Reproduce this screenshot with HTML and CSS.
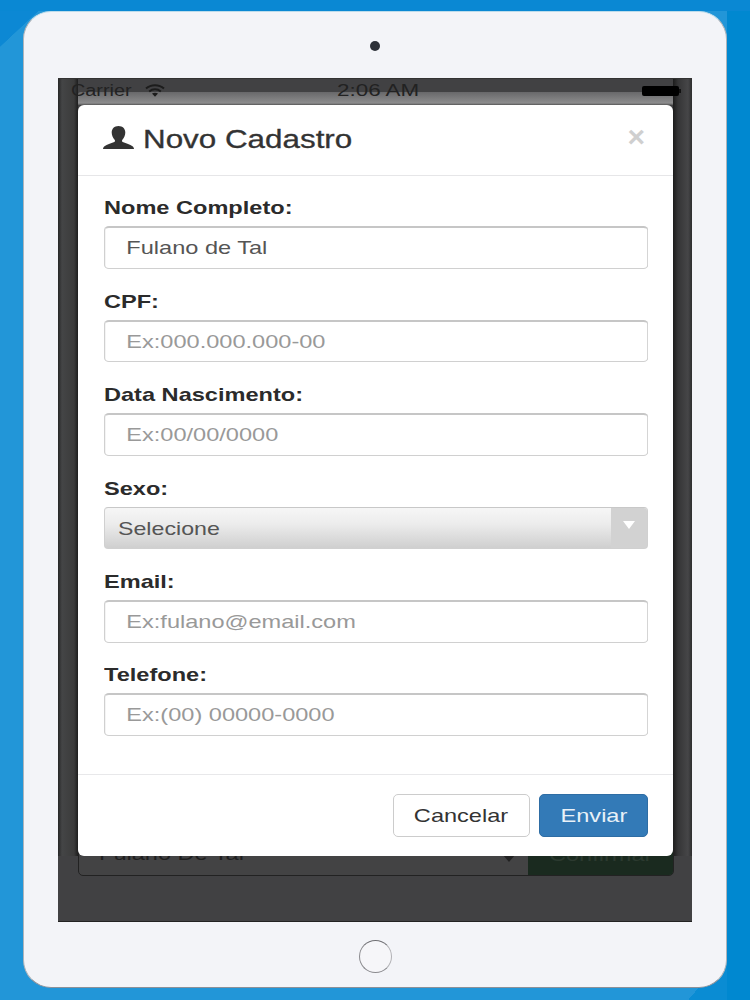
FILE: index.html
```html
<!DOCTYPE html>
<html lang="pt">
<head>
<meta charset="utf-8">
<title>Novo Cadastro</title>
<link rel="stylesheet" href="styles.css">
</head>
<body>
<div class="device">
  <div class="camera-row"><span class="camera"></span></div>
  <div class="screen">
    <div class="status">
      <div class="status-left">
        <span class="wide status-carrier">Carrier</span>
        <svg class="wifi" viewBox="0 0 20 13"><path d="M1 4.6C6 .2 14 .2 19 4.6" fill="none" stroke="#1c1c1c" stroke-width="2"/><path d="M4.2 7.4c3.400-2.800 8.200-2.800 11.600 0" fill="none" stroke="#1c1c1c" stroke-width="2"/><path d="M7 9.600c1.800-1 4.200-1 6 0l-3 3.200z" fill="#1c1c1c"/></svg>
      </div>
      <span class="status-time"><span class="wide">2:06 AM</span></span>
      <div class="battery"><span class="battery-body"></span><span class="battery-tip"></span></div>
    </div>
    <div class="backdrop-band"></div>
    <div class="modal">
      <header class="modal-header">
        <h1 class="modal-title">
          <svg class="user-icon" viewBox="0 0 31 23"><path d="M15.500 0c4.200 0 6.800 2.800 6.800 6.400 0 2.900-1.300 5.400-2.900 7.300-.7.900-.6 1.800.3 2.300 3.700 1.500 7.300 2.200 9.800 4.200.8.700 1.500 1.600 1.500 2.800H0c0-1.200.7-2.100 1.500-2.800 2.500-2 6.100-2.700 9.800-4.200.9-.5 1-1.400.3-2.300-1.600-1.900-2.900-4.400-2.900-7.300C8.700 2.800 11.300 0 15.500 0z" fill="#333"/></svg>
          <span class="wide title-text">Novo Cadastro</span>
        </h1>
        <span class="close">×</span>
      </header>
      <div class="modal-body">
        <div class="field"><label class="label"><span class="wide">Nome Completo:</span></label><input class="input" value="Fulano de Tal"></div>
        <div class="field"><label class="label"><span class="wide">CPF:</span></label><input class="input" placeholder="Ex:000.000.000-00"></div>
        <div class="field"><label class="label"><span class="wide">Data Nascimento:</span></label><input class="input" placeholder="Ex:00/00/0000"></div>
        <div class="field"><label class="label"><span class="wide">Sexo:</span></label>
          <div class="select"><span class="select-text"><span class="wide">Selecione</span></span><span class="select-arrow"><span class="triangle"></span></span></div>
        </div>
        <div class="field"><label class="label"><span class="wide">Email:</span></label><input class="input" placeholder="Ex:fulano@email.com"></div>
        <div class="field"><label class="label"><span class="wide">Telefone:</span></label><input class="input" placeholder="Ex:(00) 00000-0000"></div>
      </div>
      <footer class="modal-footer">
        <button class="btn btn-default"><span class="wide wide-center">Cancelar</span></button>
        <button class="btn btn-primary"><span class="wide wide-center">Enviar</span></button>
      </footer>
    </div>
    <div class="behind-card">
      <span class="behind-name"><span class="wide">Fulano De Tal</span></span>
      <span class="behind-caret"></span>
      <span class="behind-action"><span class="wide wide-center">Confirmar</span></span>
    </div>
  </div>
  <div class="home-row"><span class="home"></span></div>
</div>
</body>
</html>
```
FILE: styles.css
```css
* { box-sizing: border-box; }
html, body { margin: 0; height: 1000px; overflow: hidden; }
body {
  padding: 11px 23px 12px;
  font-family: "Liberation Sans", Arial, sans-serif;
  color: #333;
  background:
    linear-gradient(#0a88d3 11px, transparent 11px),
    linear-gradient(to left, #0088d0 23px, transparent 23px),
    linear-gradient(137deg, #0c88d4 34px, transparent 34.500px),
    linear-gradient(130deg, transparent 1170px, #0a8cd3 1170px),
    #2296d8;
}
.wide { display: inline-block; transform: scaleX(1.24); transform-origin: left center; white-space: nowrap; }
.wide-center { transform-origin: center; }
.device {
  height: 977px;
  background: #f3f4f8;
  border-radius: 28px;
  border: 1px solid #aeb4ba;
  border-top-color: #bcdceb;
  border-bottom-color: #8b9099;
  padding: 0 34px;
  display: flex;
  flex-direction: column;
}
.camera-row { height: 66px; display: flex; justify-content: center; padding-top: 29px; }
.camera { width: 10px; height: 10px; border-radius: 50%; background: #2c3038; }
.screen {
  position: relative;
  height: 844px;
  background-color: #414143;
  background-image:
    linear-gradient(90deg, #262627 0, #444546 4px, #3b3b3b 16px, #1e1e1e 20px, transparent 20px),
    linear-gradient(270deg, #2d2d2e 0, #464648 4px, #353536 14px, #1c1c1c 19px, transparent 19px);
  background-size: 100% 777px;
  background-repeat: no-repeat;
  border-top: 1px solid #333;
  border-bottom: 1px solid #222;
  padding: 13px 19px 0 20px;
}
.status {
  position: absolute;
  z-index: 2;
  top: 2px; left: 13px; right: 11px;
  height: 20px;
  display: flex;
  align-items: center;
  font-size: 16px;
  color: #222;
}
.status-left { display: flex; align-items: center; width: 266px; }
.status-carrier { width: 74px; }
.wifi { width: 20px; height: 13px; margin-top: -2px; }
.status-time { flex: 1; }
.status-time .wide { transform: scaleX(1.4); }
.battery { display: flex; align-items: center; margin-top: -1px; }
.battery-body { width: 37px; height: 10px; background: #000; border-radius: 2px; }
.battery-tip { width: 2px; height: 4px; background: #111; }
.backdrop-band {
  height: 13px;
  background: linear-gradient(#68686a, #8c8c8d 85%, #555 100%);
  border-radius: 3px 3px 0 0;
}
.modal {
  position: relative;
  z-index: 1;
  height: 751px;
  background: #fff;
  border-radius: 6px;
  display: flex;
  flex-direction: column;
}
.modal-header {
  height: 71px;
  border-bottom: 1px solid #e6e6e8;
  padding: 0 28px 0 25px;
  display: flex;
  justify-content: space-between;
}
.modal-title {
  margin: 0;
  height: 69px;
  display: flex;
  align-items: center;
  gap: 9px;
  font-size: 25px;
  font-weight: 400;
  -webkit-text-stroke: .3px #333;
}
.title-text { transform: scaleX(1.255); }
.user-icon { width: 31px; height: 23px; margin-top: -5px; }
.close {
  font-size: 30px;
  line-height: 64px;
  height: 64px;
  font-weight: 700;
  color: #cfcfcf;
}
.modal-body { height: 598px; padding: 17.400px 25px 0 26px; }
.field { height: 93.4px; }
.label {
  display: block;
  height: 28px;
  line-height: 29px;
  margin-bottom: 5px;
  font-size: 19px;
  font-weight: 700;
  color: #2b2b2b;
}
.input {
  display: block;
  width: calc(100% / 1.24);
  height: 42.6px;
  padding: 0 17px;
  border: 1px solid #d0d0d0;
  border-top: 2px solid #c6c6c6;
  border-radius: 4px;
  background: #fff;
  font-family: inherit;
  font-size: 19px;
  color: #555;
  outline: none;
  transform: scaleX(1.24);
  transform-origin: left center;
}
.input::placeholder { color: #999; opacity: 1; }
.select {
  height: 42.6px;
  display: flex;
  border: 1px solid #d0d0d0;
  border-top-color: #c8c8c8;
  border-radius: 4px;
  background: linear-gradient(#f6f6f6, #ececec 40%, #cfcfcf);
  font-size: 19px;
  color: #555;
}
.select-text { flex: 1; line-height: 41px; padding-left: 13px; }
.select-text .wide { transform: scaleX(1.22); }
.select-arrow {
  width: 36px;
  background: #d2d2d2;
  display: flex;
  justify-content: center;
  padding-top: 13px;
  border-radius: 0 3px 3px 0;
}
.triangle {
  width: 0; height: 0;
  border-left: 6.500px solid transparent;
  border-right: 6.500px solid transparent;
  border-top: 8px solid #fff;
}
.modal-footer {
  height: 82px;
  border-top: 1px solid #e8e8ea;
  padding: 19px 25px 0;
  display: flex;
  justify-content: flex-end;
  gap: 9px;
}
.btn {
  height: 43px;
  border-radius: 5px;
  font-family: inherit;
  font-size: 19px;
  padding: 0;
}
.btn-default { width: 137px; background: #fff; border: 1px solid #ccc; color: #333; }
.btn-primary { width: 109px; background: #337ab7; border: 1px solid #2e6da4; color: #e8f1f8; }
.behind-card {
  height: 40px;
  margin-top: -20px;
  margin-right: -1px;
  border: 1px solid #222;
  border-radius: 0 0 5px 5px;
  background: #434344;
  display: flex;
  align-items: flex-end;
  font-size: 19px;
  color: #1f1f1f;
}
.behind-name { flex: 1; padding: 0 0 10px 20px; }
.behind-caret {
  width: 0; height: 0;
  margin: 0 13px 13px 0;
  border-left: 6px solid transparent;
  border-right: 6px solid transparent;
  border-top: 7px solid #222;
}
.behind-action {
  width: 145px;
  height: 100%;
  background: #1a2a1f;
  color: #2c3a30;
  text-align: center;
  padding-top: 7px;
  border-radius: 0 0 4px 0;
}
.home-row { flex: 1; display: flex; justify-content: center; padding-top: 18px; }
.home {
  width: 33px; height: 33px; border-radius: 50%;
  border: 1.500px solid #8a8a8e;
  border-right-color: #b0b0b4;
  border-top-color: #6f6f73;
  background: #f6f6f9;
}
```
